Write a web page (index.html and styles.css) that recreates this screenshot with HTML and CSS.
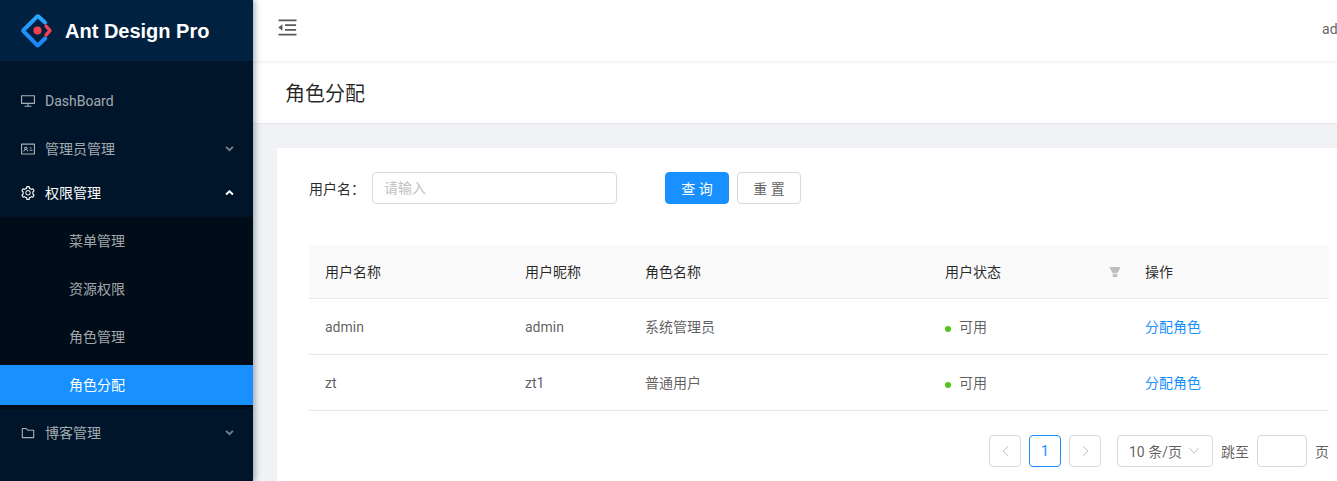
FILE: index.html
```html
<!DOCTYPE html>
<html lang="zh-CN">
<head>
<meta charset="utf-8">
<title>角色分配</title>
<link rel="stylesheet" href="styles.css">
</head>
<body>
<div class="layout">
  <aside class="sider">
    <div class="logo">
      <svg class="logo-mark" viewBox="0 0 34 34" width="34" height="34">
        <defs>
          <linearGradient id="logo-blue" gradientUnits="userSpaceOnUse" x1="20" y1="2" x2="14" y2="32">
            <stop offset="0" stop-color="#2aa8ff"/>
            <stop offset="1" stop-color="#1a84fa"/>
          </linearGradient>
        </defs>
        <path d="M24 8.5 17.4 2.6a1 1 0 0 0-1.3 0L2.6 16a1 1 0 0 0 0 1.4L16 31a1 1 0 0 0 1.4 0L24 24.5" fill="none" stroke="url(#logo-blue)" stroke-width="4" stroke-linecap="round" stroke-linejoin="round"/>
        <path d="M25 12 29 16.6 25 21" fill="none" stroke="#f5414f" stroke-width="3.4" stroke-linecap="round" stroke-linejoin="round"/>
        <circle cx="16.5" cy="16.5" r="4" fill="#f5414f"/>
      </svg>
      <h1 class="logo-text">Ant Design Pro</h1>
    </div>
    <nav class="menu">
      <a class="menu-item">
        <svg class="menu-icon" viewBox="0 0 1024 1024"><path d="M928 140H96c-17.7 0-32 14.3-32 32v496c0 17.7 14.3 32 32 32h380v112H304c-8.8 0-16 7.2-16 16v48c0 4.4 3.6 8 8 8h432c4.4 0 8-3.6 8-8v-48c0-8.8-7.2-16-16-16H548V700h380c17.7 0 32-14.3 32-32V172c0-17.7-14.3-32-32-32zm-40 488H136V212h752v416z"/></svg>
        <span>DashBoard</span>
      </a>
      <a class="menu-item">
        <svg class="menu-icon" viewBox="0 0 1024 1024"><path d="M928 160H96c-17.7 0-32 14.3-32 32v640c0 17.7 14.3 32 32 32h832c17.7 0 32-14.3 32-32V192c0-17.7-14.3-32-32-32zm-40 632H136V232h752v560zM610.3 476h123.4c1.3 0 2.3-3.6 2.3-8v-48c0-4.4-1-8-2.3-8H610.3c-1.3 0-2.3 3.6-2.3 8v48c0 4.4 1 8 2.3 8zm4.8 144h185.7c3.9 0 7.1-3.6 7.1-8v-48c0-4.4-3.2-8-7.1-8H615.1c-3.9 0-7.1 3.6-7.1 8v48c0 4.4 3.2 8 7.1 8zM224 673h43.9c4.2 0 7.6-3.3 7.9-7.5 3.8-50.5 46-90.5 97.2-90.5s93.4 40 97.2 90.5c.3 4.2 3.7 7.5 7.9 7.5H522a8 8 0 0 0 8-8.4c-2.8-53.3-32-99.7-74.6-126.1a111.8 111.8 0 0 0 29.1-75.5c0-61.9-49.9-112-111.4-112s-111.4 50.1-111.4 112c0 29.1 11 55.5 29.1 75.5a158.09 158.09 0 0 0-74.6 126.1c-.4 4.6 3.2 8.4 7.8 8.4zm149-262c28.5 0 51.7 23.3 51.7 52s-23.2 52-51.7 52-51.7-23.3-51.7-52 23.2-52 51.7-52z"/></svg>
        <span class="cjk-label">管理员管理</span>
        <svg class="arrow" viewBox="0 0 10 6"><path d="M1.2 1 5 4.6 8.8 1"/></svg>
      </a>
      <div class="submenu-group">
        <a class="menu-item is-open">
          <svg class="menu-icon" viewBox="0 0 1024 1024"><path d="M924.8 625.7l-65.5-56c3.1-19 4.7-38.4 4.7-57.8s-1.6-38.8-4.7-57.8l65.5-56a32.03 32.03 0 0 0 9.3-35.2l-.9-2.6a443.74 443.74 0 0 0-79.7-137.9l-1.8-2.1a32.12 32.12 0 0 0-35.1-9.5l-81.3 28.9c-30-24.6-63.5-44-99.7-57.6l-15.7-85a32.05 32.05 0 0 0-25.8-25.7l-2.7-.5c-52.1-9.4-106.9-9.4-159 0l-2.7.5a32.05 32.05 0 0 0-25.8 25.7l-15.8 85.4a351.86 351.86 0 0 0-99 57.4l-81.9-29.1a32 32 0 0 0-35.1 9.5l-1.8 2.1a446.02 446.02 0 0 0-79.7 137.9l-.9 2.6c-4.5 12.5-.8 26.5 9.3 35.2l66.3 56.6c-3.1 18.8-4.6 38-4.6 57.1 0 19.2 1.5 38.4 4.6 57.1L99 625.5a32.03 32.03 0 0 0-9.3 35.2l.9 2.6c18.1 50.4 44.9 96.9 79.7 137.9l1.8 2.1a32.12 32.12 0 0 0 35.1 9.5l81.9-29.1c29.8 24.5 63.1 43.9 99 57.4l15.8 85.4a32.05 32.05 0 0 0 25.8 25.7l2.7.5a449.4 449.4 0 0 0 159 0l2.7-.5a32.05 32.05 0 0 0 25.8-25.7l15.7-85a350 350 0 0 0 99.7-57.6l81.3 28.9a32 32 0 0 0 35.1-9.5l1.8-2.1c34.8-41.1 61.6-87.5 79.7-137.9l.9-2.6c4.5-12.3.8-26.3-9.3-35zM788.3 465.9c2.5 15.1 3.8 30.6 3.8 46.1s-1.3 31-3.8 46.1l-6.6 40.1 74.7 63.9a370.03 370.03 0 0 1-42.6 73.6L721 702.8l-31.4 25.8c-23.9 19.6-50.5 35-79.3 45.8l-38.1 14.3-17.9 97a377.5 377.5 0 0 1-85 0l-17.9-97.2-37.8-14.5c-28.5-10.8-55-26.2-78.7-45.7l-31.4-25.9-93.4 33.2c-17-22.9-31.2-47.6-42.6-73.6l75.5-64.5-6.5-40c-2.4-14.9-3.7-30.3-3.7-45.5 0-15.3 1.2-30.6 3.7-45.5l6.5-40-75.5-64.5c11.3-26.1 25.6-50.7 42.6-73.6l93.4 33.2 31.4-25.9c23.7-19.5 50.2-34.9 78.7-45.7l37.9-14.3 17.9-97.2c28.1-3.2 56.8-3.2 85 0l17.9 97 38.1 14.3c28.7 10.8 55.4 26.2 79.3 45.8l31.4 25.8 92.8-32.9c17 22.9 31.2 47.6 42.6 73.6L781.8 426l6.5 39.9zM512 326c-97.2 0-176 78.8-176 176s78.8 176 176 176 176-78.8 176-176-78.8-176-176-176zm79.2 255.2A111.6 111.6 0 0 1 512 614c-29.9 0-58-11.7-79.2-32.8A111.6 111.6 0 0 1 400 502c0-29.9 11.7-58 32.8-79.2C454 401.6 482.1 390 512 390c29.9 0 58 11.6 79.2 32.8A111.6 111.6 0 0 1 624 502c0 29.9-11.7 58-32.8 79.2z"/></svg>
          <span class="cjk-label">权限管理</span>
          <svg class="arrow" viewBox="0 0 10 6"><path d="M1.2 5 5 1.4 8.8 5"/></svg>
        </a>
        <div class="submenu">
          <a class="sub-item">菜单管理</a>
          <a class="sub-item">资源权限</a>
          <a class="sub-item">角色管理</a>
          <a class="sub-item is-active">角色分配</a>
        </div>
      </div>
      <a class="menu-item">
        <svg class="menu-icon" viewBox="0 0 1024 1024"><path d="M880 298.4H521L403.7 186.2a8.15 8.15 0 0 0-5.5-2.2H144c-17.7 0-32 14.3-32 32v592c0 17.7 14.3 32 32 32h736c17.7 0 32-14.3 32-32V330.4c0-17.7-14.3-32-32-32zM840 768H184V256h188.5l119.6 114.4H840V768z"/></svg>
        <span class="cjk-label">博客管理</span>
        <svg class="arrow" viewBox="0 0 10 6"><path d="M1.2 1 5 4.6 8.8 1"/></svg>
      </a>
    </nav>
  </aside>

  <div class="main">
    <header class="topbar">
      <svg class="trigger" viewBox="0 0 1024 1024"><path d="M408 442h480c4.4 0 8-3.6 8-8v-56c0-4.4-3.6-8-8-8H408c-4.4 0-8 3.6-8 8v56c0 4.4 3.6 8 8 8zm-8 204c0 4.4 3.6 8 8 8h480c4.4 0 8-3.6 8-8v-56c0-4.4-3.6-8-8-8H408c-4.4 0-8 3.6-8 8v56zm504-486H120c-4.4 0-8 3.6-8 8v56c0 4.4 3.6 8 8 8h784c4.4 0 8-3.6 8-8v-56c0-4.4-3.6-8-8-8zm0 632H120c-4.4 0-8 3.6-8 8v56c0 4.4 3.6 8 8 8h784c4.4 0 8-3.6 8-8v-56c0-4.4-3.6-8-8-8zM115.4 518.9 271.7 642c5.8 4.6 14.4.5 14.4-6.9V388.9c0-7.4-8.5-11.5-14.4-6.9L115.4 505.1a8.74 8.74 0 0 0 0 13.8z"/></svg>
      <span class="user">admin</span>
    </header>
    <div class="page-title"><h2>角色分配</h2></div>
    <div class="content">
      <section class="card">
        <form class="search">
          <label class="search-label">用户名：</label>
          <input class="search-input" type="text" placeholder="请输入">
          <button class="btn btn-primary" type="button">查 询</button>
          <button class="btn" type="button">重 置</button>
        </form>
        <table class="table">
          <colgroup>
            <col class="c1"><col class="c2"><col class="c3"><col class="c4"><col class="c5">
          </colgroup>
          <thead>
            <tr>
              <th>用户名称</th>
              <th>用户昵称</th>
              <th>角色名称</th>
              <th class="has-filter">用户状态
                <svg class="filter" viewBox="0 0 1024 1024"><path d="M349 838c0 17.7 14.2 32 31.8 32h262.4c17.6 0 31.8-14.3 31.8-32V642H349v196zm531.1-684H143.9c-24.5 0-39.8 26.7-27.5 48l221.3 376h348.8l221.3-376c12.1-21.3-3.2-48-27.7-48z"/></svg>
              </th>
              <th>操作</th>
            </tr>
          </thead>
          <tbody>
            <tr>
              <td class="latin">admin</td><td class="latin">admin</td><td>系统管理员</td>
              <td><i class="dot"></i>可用</td>
              <td><a class="link">分配角色</a></td>
            </tr>
            <tr>
              <td class="latin">zt</td><td class="latin">zt1</td><td>普通用户</td>
              <td><i class="dot"></i>可用</td>
              <td><a class="link">分配角色</a></td>
            </tr>
          </tbody>
        </table>
        <div class="pagination">
          <span class="page-btn"><svg class="chev" viewBox="0 0 10 14"><path d="M8 1.5 2 7l6 5.5"/></svg></span>
          <span class="page-btn is-current">1</span>
          <span class="page-btn"><svg class="chev" viewBox="0 0 10 14"><path d="M2 1.5 8 7l-6 5.5"/></svg></span>
          <span class="page-size">10 条/页<svg class="chev-down" viewBox="0 0 14 10"><path d="M1.5 2 7 8l5.5-6"/></svg></span>
          <span class="jump">跳至</span>
          <input class="jump-input" type="text">
          <span class="jump-end">页</span>
        </div>
      </section>
    </div>
  </div>
</div>
</body>
</html>
```

FILE: styles.css
```css
* { box-sizing: border-box; }
html, body { margin: 0; padding: 0; height: 100%; overflow: hidden; }
body {
  font-family: Roboto, "Noto Sans CJK SC", sans-serif;
  font-size: 14px;
  color: rgba(0, 0, 0, .65);
  background: #f0f2f5;
}
.layout { display: flex; width: 1385px; height: 481px; }

.sider {
  flex: 0 0 253px;
  background: #001529;
  box-shadow: 2px 0 6px rgba(0, 21, 41, .35);
  position: relative;
  z-index: 2;
}
.logo {
  height: 61px;
  background: #002140;
  display: flex;
  align-items: center;
  padding-left: 21px;
  gap: 10px;
}
.logo-mark { flex: none; }
.logo-text {
  margin: 0;
  font: 700 20px/1 "Liberation Sans", sans-serif;
  color: #fff;
}
.menu { padding-top: 20px; }
.menu-item {
  display: flex;
  align-items: center;
  height: 40px;
  margin-bottom: 4px;
  padding-left: 20px;
  padding-right: 19px;
  color: rgba(255, 255, 255, .65);
}
.menu > .menu-item:first-child { margin-bottom: 8px; }
.menu-icon { width: 16px; height: 16px; margin-right: 9px; fill: currentColor; flex: none; }
.cjk-label { margin-top: -2px; }
.arrow {
  width: 9px;
  height: 5.4px;
  margin-left: auto;
  fill: none;
  stroke: currentColor;
  stroke-width: 2.2;
  opacity: .7;
}
.is-open { color: #fff; }
.is-open .arrow { opacity: 1; }
.submenu { background: #000c17; padding: 4px 0; margin-bottom: 4px; }
.sub-item {
  display: flex;
  align-items: center;
  height: 40px;
  margin-bottom: 8px;
  padding-left: 69px;
  padding-bottom: 2px;
  color: rgba(255, 255, 255, .65);
}
.sub-item:last-child { margin-bottom: 0; }
.is-active { background: #1890ff; color: #fff; }

.main { flex: 1; min-width: 0; display: flex; flex-direction: column; }
.topbar {
  flex: none;
  height: 61px;
  background: #fff;
  display: flex;
  align-items: center;
  justify-content: space-between;
  padding: 0 24px 0 23px;
  box-shadow: 0 1px 4px rgba(0, 21, 41, .08);
  position: relative;
  z-index: 1;
}
.trigger { width: 23px; height: 23px; fill: #595959; margin-top: -7px; }
.user { font-size: 14px; color: rgba(0, 0, 0, .65); margin-top: -4px; }
.page-title {
  flex: none;
  height: 63px;
  background: #fff;
  border-bottom: 1px solid #e8e8e8;
  display: flex;
  align-items: center;
  padding-left: 32px;
}
.page-title h2 {
  margin: 0;
  font-size: 20px;
  font-weight: 400;
  color: rgba(0, 0, 0, .85);
}
.content { padding: 24px 24px 0; flex: none; }
.card { background: #fff; padding: 24px 32px 0; height: 333px; }

.search { display: flex; align-items: center; height: 32px; margin-bottom: 41px; }
.search-label { width: 63px; color: rgba(0, 0, 0, .85); }
.search-input {
  width: 245px;
  height: 32px;
  padding: 4px 11px;
  border: 1px solid #d9d9d9;
  border-radius: 4px;
  font: inherit;
  margin-right: 48px;
}
.search-input::placeholder { color: #bfbfbf; }
.btn {
  width: 64px;
  height: 32px;
  border: 1px solid #d9d9d9;
  border-radius: 4px;
  background: #fff;
  color: rgba(0, 0, 0, .65);
  font: inherit;
  padding: 0;
  margin-right: 8px;
}
.btn-primary { background: #1890ff; border-color: #1890ff; color: #fff; }

.table { width: 1020px; border-collapse: collapse; table-layout: fixed; }
.c1 { width: 200px; }
.c2 { width: 120px; }
.c3 { width: 300px; }
.c4 { width: 200px; }
.c5 { width: 200px; }
.table th {
  height: 53px;
  padding: 0 16px;
  background: #fafafa;
  text-align: left;
  font-weight: 400;
  color: rgba(0, 0, 0, .85);
  border-bottom: 1px solid #e8e8e8;
}
.table td {
  height: 56px;
  padding: 0 16px;
  border-bottom: 1px solid #e8e8e8;
}
.table td.latin { padding-top: 2px; }
.has-filter { position: relative; }
.filter {
  position: absolute;
  right: 7px;
  top: 20px;
  width: 14px;
  height: 14px;
  fill: #bfbfbf;
}
.dot {
  display: inline-block;
  width: 6px;
  height: 6px;
  border-radius: 50%;
  background: #52c41a;
  margin-right: 8px;
  vertical-align: middle;
  position: relative;
  top: 1px;
}
.link { color: #1890ff; }

.pagination {
  display: flex;
  align-items: center;
  justify-content: flex-end;
  margin-top: 24px;
  height: 32px;
}
.page-btn {
  width: 32px;
  height: 32px;
  border: 1px solid #d9d9d9;
  border-radius: 4px;
  display: flex;
  align-items: center;
  justify-content: center;
  margin-right: 8px;
}
.is-current { border-color: #1890ff; color: #1890ff; }
.chev { width: 9px; height: 12px; fill: none; stroke: #bfbfbf; stroke-width: 1.1; }
.page-size {
  width: 96px;
  height: 32px;
  margin-left: 8px;
  border: 1px solid #d9d9d9;
  border-radius: 4px;
  display: flex;
  align-items: center;
  justify-content: space-between;
  padding: 0 12px 0 11px;
}
.chev-down { width: 12px; height: 9px; fill: none; stroke: #bfbfbf; stroke-width: 1.1; }
.jump { margin-left: 8px; }
.jump-input {
  width: 50px;
  height: 32px;
  margin: 0 8px;
  border: 1px solid #d9d9d9;
  border-radius: 4px;
}
```
